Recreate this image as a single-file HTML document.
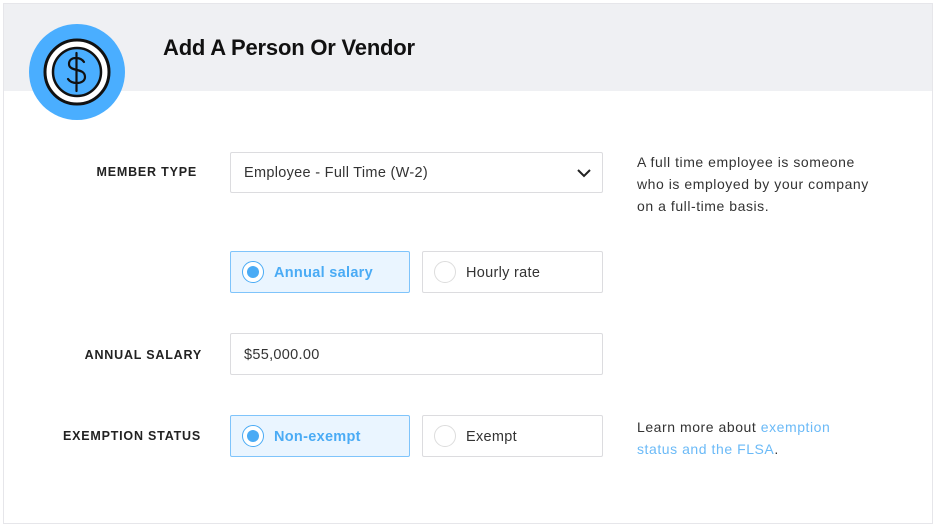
<!DOCTYPE html>
<html><head><style>
body{margin:0;width:936px;height:528px;background:#fff;position:relative;overflow:hidden;font-family:"Liberation Sans",sans-serif;}
.frame{position:absolute;left:3px;top:3px;width:930px;height:521px;border:1px solid #e6e6ea;box-sizing:border-box;}
.hdr{position:absolute;left:4px;top:4px;width:928px;height:87px;background:#eff0f3;}
h1{position:absolute;left:163px;top:35px;margin:0;font-size:22px;font-weight:bold;color:#111;letter-spacing:-0.2px;}
.lbl{position:absolute;font-size:12.5px;font-weight:bold;color:#222;letter-spacing:0.8px;text-align:right;}
.box{position:absolute;border:1px solid #dcdcdf;border-radius:2px;box-sizing:border-box;background:#fff;font-size:14.5px;color:#333;letter-spacing:0.3px;}
.sel{background:#eaf5ff;border:1.5px solid #7fc4fb;color:#4aabf5;font-weight:bold;}
.rad{position:absolute;left:11px;top:9px;width:22px;height:22px;border-radius:50%;border:1.5px solid #ddd;box-sizing:border-box;background:#fff;}
.sel .rad{border-color:#4aabf5;}
.sel .rad::after{content:"";position:absolute;left:3.5px;top:3.5px;width:12px;height:12px;border-radius:50%;background:#4aabf5;}
.txt{position:absolute;left:43px;top:13px;}
.help{position:absolute;left:637px;font-size:14px;line-height:22px;color:#333;letter-spacing:0.55px;}
a{color:#6bbaf7;text-decoration:none;}
</style></head><body>
<div class="frame"></div>
<div class="hdr"></div>
<svg style="position:absolute;left:29px;top:24px" width="98" height="98" viewBox="0 0 98 98">
<circle cx="48" cy="48" r="48" fill="#4aaeff"/>
<circle cx="48" cy="48" r="32" fill="#fff" stroke="#111" stroke-width="3"/>
<circle cx="48" cy="48" r="24" fill="#4aaeff" stroke="#111" stroke-width="2.5"/>
<path d="M55 38c-2-3-5-4-8-4-4 0-7 2-7 6 0 4 4 5 8 6 4 1 8 2 8 7 0 4-4 6-8 6-3 0-7-1-9-4M47.5 29v38" fill="none" stroke="#111" stroke-width="2.2" stroke-linecap="round"/>
</svg>
<h1>Add A Person Or Vendor</h1>
<div class="lbl" style="left:60px;width:137px;top:165px">MEMBER TYPE</div>
<div class="lbl" style="left:40px;width:162px;top:348px">ANNUAL SALARY</div>
<div class="lbl" style="left:20px;width:181px;top:429px">EXEMPTION STATUS</div>
<div class="box" style="left:230px;top:152px;width:373px;height:41px"><span style="position:absolute;left:13px;top:12px">Employee - Full Time (W-2)</span>
<svg style="position:absolute;right:10px;top:15px" width="16" height="10" viewBox="0 0 16 10"><path d="M2 2l6 6 6-6" fill="none" stroke="#222" stroke-width="2"/></svg></div>
<div class="box sel" style="left:230px;top:251px;width:180px;height:42px"><div class="rad"></div><span class="txt">Annual salary</span></div>
<div class="box" style="left:422px;top:251px;width:181px;height:42px"><div class="rad"></div><span class="txt">Hourly rate</span></div>
<div class="box" style="left:230px;top:333px;width:373px;height:42px"><span style="position:absolute;left:13px;top:13px">$55,000.00</span></div>
<div class="box sel" style="left:230px;top:415px;width:180px;height:42px"><div class="rad"></div><span class="txt">Non-exempt</span></div>
<div class="box" style="left:422px;top:415px;width:181px;height:42px"><div class="rad"></div><span class="txt">Exempt</span></div>
<div class="help" style="top:151px">A full time employee is someone<br>who is employed by your company<br>on a full-time basis.</div>
<div class="help" style="top:416px">Learn more about <a>exemption</a><br><a>status and the FLSA</a>.</div>
</body></html>
